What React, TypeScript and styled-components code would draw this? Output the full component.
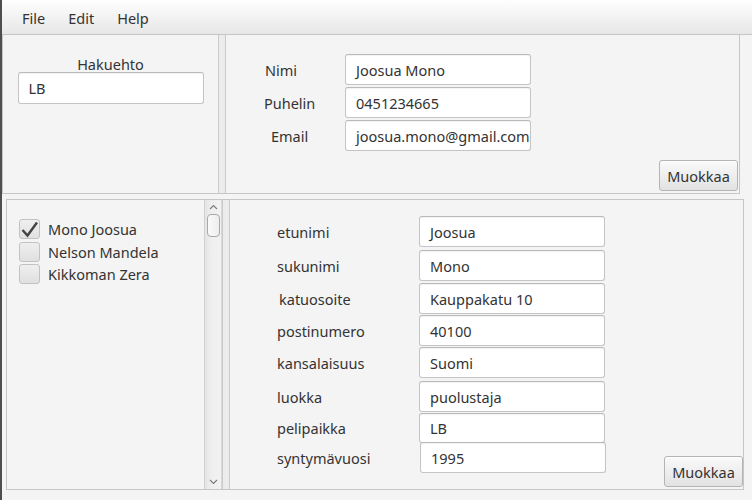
import React from "react";
import styled, { createGlobalStyle } from "styled-components";

const Global = createGlobalStyle`
  html, body { margin: 0; padding: 0; background: #f4f4f4; }
  body { font-family: "Noto Sans", "Open Sans", sans-serif; color: #333333; }
  * { box-sizing: border-box; }
`;

const FONT = 14.5;

const Window = styled.div`
  width: 752px;
  height: 500px;
  display: flex;
  flex-direction: column;
  background: #f4f4f4;
  border-left: 2px solid #4e4e4e;
  overflow: hidden;
`;

const MenuBar = styled.div`
  height: 35px;
  display: flex;
  align-items: center;
  gap: 23px;
  padding-left: 20px;
  padding-top: 2px;
  background: linear-gradient(#fefefe, #e7e7e7);
  border-bottom: 1px solid #c6c6c6;
`;

const MenuItem = styled.span`
  font-size: ${FONT}px;
  color: #333;
`;

const TopSplit = styled.div`
  width: 738px;
  height: 159px;
  display: flex;
  border: 1px solid #c6c6c6;
  border-top: none;
`;

const BottomSplit = styled.div`
  width: 738px;
  height: 291px;
  margin: 5px 0 0 4px;
  display: flex;
  border: 1px solid #c6c6c6;
`;

const Divider = styled.div`
  width: 8px;
  flex: none;
  background: #ececec;
  border-left: 1px solid #cacaca;
  border-right: 1px solid #cacaca;
`;

const SearchPane = styled.div`
  width: 215px;
  flex: none;
  display: flex;
  flex-direction: column;
  align-items: center;
  padding-top: 19px;
`;

const PaneLabel = styled.div`
  font-size: ${FONT}px;
  line-height: 18px;
  height: 18px;
  padding-top: 1px;
`;

const TextField = styled.div<{ $w?: number; $h?: number }>`
  width: ${(p) => p.$w ?? 186}px;
  height: ${(p) => p.$h ?? 31}px;
  flex: none;
  display: flex;
  align-items: center;
  padding-left: 10px;
  white-space: nowrap;
  overflow: hidden;
  font-size: ${FONT}px;
  color: #333;
  background: #ffffff;
  border: 1px solid #c4c4c4;
  border-top-color: #b9b9b9;
  border-radius: 3px;
  box-shadow: inset 0 1px 1px rgba(0, 0, 0, 0.05);
`;

const InfoPane = styled.div`
  flex: 1;
  display: flex;
  justify-content: space-between;
  padding-top: 19px;
`;

const InfoGrid = styled.div`
  display: grid;
  grid-template-columns: 119px 186px;
  row-gap: 2px;
  align-self: flex-start;
`;

const FieldLabel = styled.div<{ $indent: number }>`
  display: flex;
  align-items: center;
  padding-left: ${(p) => p.$indent}px;
  font-size: ${FONT}px;
  color: #333;
`;

const Button = styled.div<{ $mb: number; $mr: number }>`
  align-self: flex-end;
  width: 79px;
  height: 31px;
  margin: 0 ${(p) => p.$mr}px ${(p) => p.$mb}px 0;
  display: flex;
  align-items: center;
  justify-content: center;
  font-size: ${FONT}px;
  color: #333;
  background: linear-gradient(#fafafa, #e2e2e2);
  border: 1px solid #b4b4b4;
  border-radius: 3px;
  box-shadow: inset 0 1px 0 #ffffff;
`;

const ListPane = styled.div`
  width: 215px;
  flex: none;
  display: flex;
`;

const List = styled.div`
  flex: 1;
  display: flex;
  flex-direction: column;
  padding: 19px 0 0 12px;
`;

const CheckRow = styled.div`
  height: 22.5px;
  display: flex;
  align-items: flex-start;
  gap: 8px;
`;

const CheckBox = styled.div`
  width: 21px;
  height: 20px;
  flex: none;
  display: flex;
  align-items: center;
  justify-content: center;
  background: linear-gradient(#efefef, #e0e0e0);
  border: 1px solid #c2c2c2;
  border-radius: 3px;
`;

const CheckText = styled.span`
  font-size: ${FONT}px;
  line-height: 20px;
  color: #333;
`;

const ScrollBar = styled.div`
  width: 18px;
  flex: none;
  display: flex;
  flex-direction: column;
  align-items: center;
  background: linear-gradient(90deg, #e4e4e4, #efefef 40%, #f2f2f2);
  border-left: 1px solid #d0d0d0;
  border-right: 1px solid #d8d8d8;
`;

const Arrow = styled.div`
  height: 14px;
  display: flex;
  align-items: center;
  justify-content: center;
`;

const Thumb = styled.div`
  width: 13px;
  height: 23px;
  border-radius: 4px;
  border: 1px solid #a9a9a9;
  background: linear-gradient(90deg, #fafafa, #eeeeee);
`;

const Track = styled.div`
  flex: 1;
`;

const DetailPane = styled.div`
  flex: 1;
  display: flex;
  justify-content: space-between;
`;

const DetailForm = styled.div`
  display: flex;
  flex-direction: column;
  align-self: flex-start;
`;

const DetailRow = styled.div<{ $mt: number; $h: number }>`
  display: grid;
  grid-template-columns: 189px auto;
  height: ${(p) => p.$h}px;
  margin-top: ${(p) => p.$mt}px;
`;

const FieldOffset = styled.div<{ $dx: number }>`
  padding-left: ${(p) => p.$dx}px;
`;

const Chevron = ({ up }: { up: boolean }) => (
  <svg width="9" height="6" viewBox="0 0 9 6">
    <path
      d={up ? "M1 5 L4.5 1.5 L8 5" : "M1 1 L4.5 4.5 L8 1"}
      fill="none"
      stroke="#7a7a7a"
      strokeWidth="1.1"
    />
  </svg>
);

const Check = () => (
  <svg width="19" height="18" viewBox="0 0 19 18">
    <path d="M2.5 10 L7.5 15.5 L17 2.5" fill="none" stroke="#444" strokeWidth="2.4" strokeLinejoin="miter" />
  </svg>
);

const players = [
  { name: "Mono Joosua", checked: true },
  { name: "Nelson Mandela", checked: false },
  { name: "Kikkoman Zera", checked: false },
];

const info = [
  { label: "Nimi", indent: 39, value: "Joosua Mono" },
  { label: "Puhelin", indent: 38, value: "0451234665" },
  { label: "Email", indent: 45, value: "joosua.mono@gmail.com" },
];

const details = [
  { label: "etunimi", value: "Joosua", mt: 16, h: 31, indent: 47, dx: 0 },
  { label: "sukunimi", value: "Mono", mt: 3, h: 31, indent: 47, dx: 0 },
  { label: "katuosoite", value: "Kauppakatu 10", mt: 2, h: 31, indent: 49, dx: 0 },
  { label: "postinumero", value: "40100", mt: 1, h: 31, indent: 47, dx: 0 },
  { label: "kansalaisuus", value: "Suomi", mt: 1, h: 31, indent: 47, dx: 0 },
  { label: "luokka", value: "puolustaja", mt: 3, h: 31, indent: 47, dx: 0 },
  { label: "pelipaikka", value: "LB", mt: 1, h: 30, indent: 47, dx: 0 },
  { label: "syntymävuosi", value: "1995", mt: -1, h: 31, indent: 47, dx: 1 },
];

export default function App() {
  return (
    <>
      <Global />
      <Window>
        <MenuBar>
          <MenuItem>File</MenuItem>
          <MenuItem>Edit</MenuItem>
          <MenuItem>Help</MenuItem>
        </MenuBar>
        <TopSplit>
          <SearchPane>
            <PaneLabel>Hakuehto</PaneLabel>
            <TextField $h={32}>LB</TextField>
          </SearchPane>
          <Divider />
          <InfoPane>
            <InfoGrid>
              {info.map((r) => (
                <React.Fragment key={r.label}>
                  <FieldLabel $indent={r.indent}>{r.label}</FieldLabel>
                  <TextField>{r.value}</TextField>
                </React.Fragment>
              ))}
            </InfoGrid>
            <Button $mb={2} $mr={1}>Muokkaa</Button>
          </InfoPane>
        </TopSplit>
        <BottomSplit>
          <ListPane>
            <List>
              {players.map((p) => (
                <CheckRow key={p.name}>
                  <CheckBox>{p.checked && <Check />}</CheckBox>
                  <CheckText>{p.name}</CheckText>
                </CheckRow>
              ))}
            </List>
            <ScrollBar>
              <Arrow><Chevron up /></Arrow>
              <Thumb />
              <Track />
              <Arrow><Chevron up={false} /></Arrow>
            </ScrollBar>
          </ListPane>
          <Divider />
          <DetailPane>
            <DetailForm>
              {details.map((d) => (
                <DetailRow key={d.label} $mt={d.mt} $h={d.h}>
                  <FieldLabel $indent={d.indent}>{d.label}</FieldLabel>
                  <FieldOffset $dx={d.dx}>
                    <TextField $h={d.h}>{d.value}</TextField>
                  </FieldOffset>
                </DetailRow>
              ))}
            </DetailForm>
            <Button $mb={2} $mr={0}>Muokkaa</Button>
          </DetailPane>
        </BottomSplit>
      </Window>
    </>
  );
}
